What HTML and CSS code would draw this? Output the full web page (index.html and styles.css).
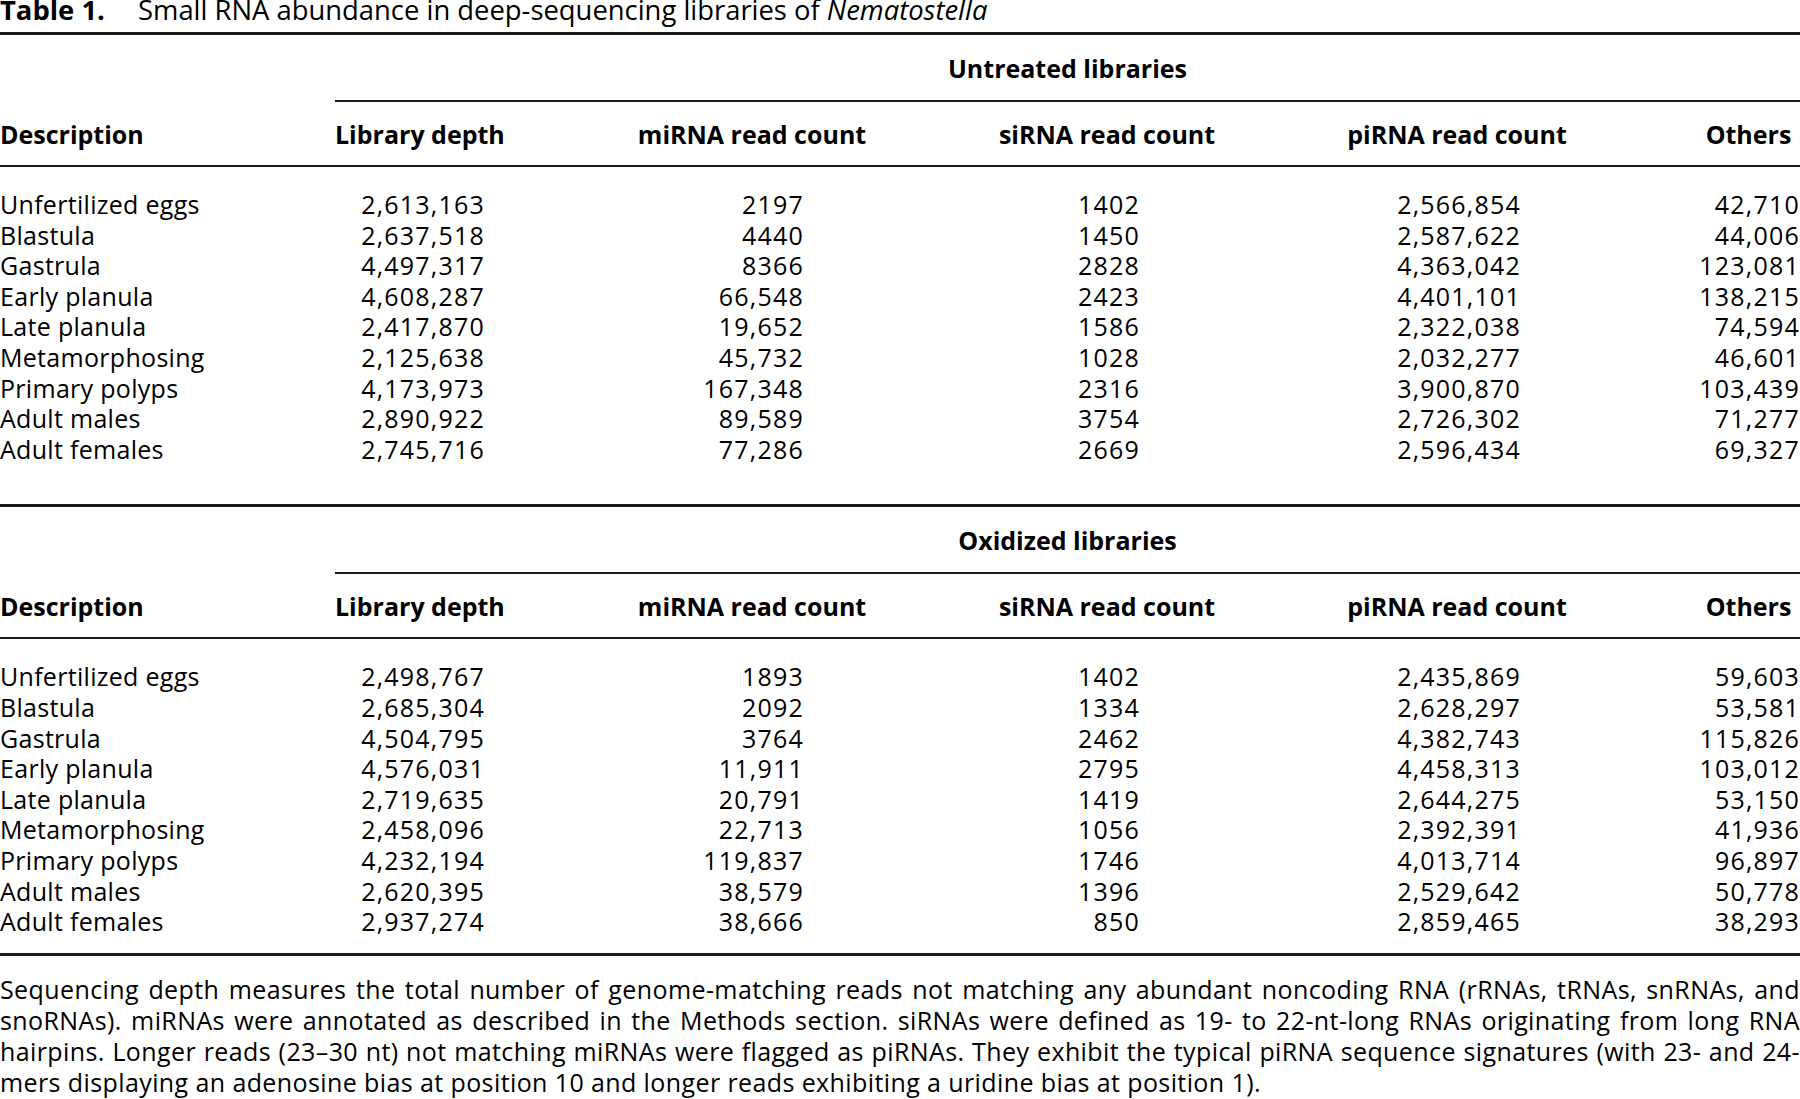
FILE: index.html
```html
<!DOCTYPE html>
<html lang="en">

<head>
    <meta charset="UTF-8">
    <meta name="viewport" content="width=device-width, initial-scale=1.0">
    <title>Table 1. Small RNA abundance</title>
    <link rel="stylesheet" href="styles.css">
</head>

<body>
    <div class="title"><b>Table 1.</b>Small RNA abundance in deep-sequencing libraries of <i>Nematostella</i></div>

    <table class="block">
        <colgroup>
            <col class="w1"><col class="w2"><col class="w3"><col class="w4"><col class="w5"><col class="w6">
        </colgroup>
        <thead>
            <tr class="group">
                <th></th>
                <th colspan="5" class="span">Untreated libraries</th>
            </tr>
            <tr class="head">
                <th class="desc">Description</th>
                <th class="depth">Library depth</th>
                <th>miRNA read count</th>
                <th>siRNA read count</th>
                <th>piRNA read count</th>
                <th>Others</th>
            </tr>
        </thead>
        <tbody>
            <tr class="first"><td>Unfertilized eggs</td><td>2,613,163</td><td>2197</td><td>1402</td><td>2,566,854</td><td>42,710</td></tr>
            <tr><td>Blastula</td><td>2,637,518</td><td>4440</td><td>1450</td><td>2,587,622</td><td>44,006</td></tr>
            <tr><td>Gastrula</td><td>4,497,317</td><td>8366</td><td>2828</td><td>4,363,042</td><td>123,081</td></tr>
            <tr><td>Early planula</td><td>4,608,287</td><td>66,548</td><td>2423</td><td>4,401,101</td><td>138,215</td></tr>
            <tr><td>Late planula</td><td>2,417,870</td><td>19,652</td><td>1586</td><td>2,322,038</td><td>74,594</td></tr>
            <tr><td>Metamorphosing</td><td>2,125,638</td><td>45,732</td><td>1028</td><td>2,032,277</td><td>46,601</td></tr>
            <tr><td>Primary polyps</td><td>4,173,973</td><td>167,348</td><td>2316</td><td>3,900,870</td><td>103,439</td></tr>
            <tr><td>Adult males</td><td>2,890,922</td><td>89,589</td><td>3754</td><td>2,726,302</td><td>71,277</td></tr>
            <tr class="last"><td>Adult females</td><td>2,745,716</td><td>77,286</td><td>2669</td><td>2,596,434</td><td>69,327</td></tr>
        </tbody>
    </table>

    <table class="block second">
        <colgroup>
            <col class="w1"><col class="w2"><col class="w3"><col class="w4"><col class="w5"><col class="w6">
        </colgroup>
        <thead>
            <tr class="group">
                <th></th>
                <th colspan="5" class="span">Oxidized libraries</th>
            </tr>
            <tr class="head">
                <th class="desc">Description</th>
                <th class="depth">Library depth</th>
                <th>miRNA read count</th>
                <th>siRNA read count</th>
                <th>piRNA read count</th>
                <th>Others</th>
            </tr>
        </thead>
        <tbody>
            <tr class="first"><td>Unfertilized eggs</td><td>2,498,767</td><td>1893</td><td>1402</td><td>2,435,869</td><td>59,603</td></tr>
            <tr><td>Blastula</td><td>2,685,304</td><td>2092</td><td>1334</td><td>2,628,297</td><td>53,581</td></tr>
            <tr><td>Gastrula</td><td>4,504,795</td><td>3764</td><td>2462</td><td>4,382,743</td><td>115,826</td></tr>
            <tr><td>Early planula</td><td>4,576,031</td><td>11,911</td><td>2795</td><td>4,458,313</td><td>103,012</td></tr>
            <tr><td>Late planula</td><td>2,719,635</td><td>20,791</td><td>1419</td><td>2,644,275</td><td>53,150</td></tr>
            <tr><td>Metamorphosing</td><td>2,458,096</td><td>22,713</td><td>1056</td><td>2,392,391</td><td>41,936</td></tr>
            <tr><td>Primary polyps</td><td>4,232,194</td><td>119,837</td><td>1746</td><td>4,013,714</td><td>96,897</td></tr>
            <tr><td>Adult males</td><td>2,620,395</td><td>38,579</td><td>1396</td><td>2,529,642</td><td>50,778</td></tr>
            <tr class="last"><td>Adult females</td><td>2,937,274</td><td>38,666</td><td>850</td><td>2,859,465</td><td>38,293</td></tr>
        </tbody>
    </table>

    <p class="note">
        <span class="ln">Sequencing depth measures the total number of genome-matching reads not matching any abundant noncoding RNA (rRNAs, tRNAs, snRNAs, and</span>
        <span class="ln">snoRNAs). miRNAs were annotated as described in the Methods section. siRNAs were defined as 19- to 22-nt-long RNAs originating from long RNA</span>
        <span class="ln">hairpins. Longer reads (23–30 nt) not matching miRNAs were flagged as piRNAs. They exhibit the typical piRNA sequence signatures (with 23- and 24-</span>
        <span class="ln end">mers displaying an adenosine bias at position 10 and longer reads exhibiting a uridine bias at position 1).</span>
    </p>
</body>

</html>
```

FILE: styles.css
```css
body {
    margin: 0;
    font-family: "Open Sans", Lato, "Liberation Sans", sans-serif;
    font-size: 25px;
    color: #000;
    background-color: #fff;
}

.title {
    margin: 0 0 12px;
    font-size: 27.4px;
    line-height: 20px;
    white-space: nowrap;
}

.title b {
    display: inline-block;
    width: 138px;
}

.block {
    width: 1800px;
    table-layout: fixed;
    border-collapse: separate;
    border-spacing: 0;
}

.block .group th {
    border-top: 3px solid #1a1a1a;
}

.block.second .group th {
    border-top: none;
}

.w1 { width: 335px; }
.w2 { width: 172px; }
.w3 { width: 490px; }
.w4 { width: 220px; }
.w5 { width: 480px; }
.w6 { width: 103px; }

th {
    font-weight: bold;
    white-space: nowrap;
    line-height: 30px;
    text-align: center;
    padding: 0;
}

.group th {
    padding: 18px 0 17px;
}

.group .span {
    border-bottom: 2px solid #1a1a1a;
}

.head th {
    padding: 17px 0 16px;
    border-bottom: 2px solid #1a1a1a;
}

.head .desc,
.head .depth {
    text-align: left;
}

td {
    padding: 0;
    line-height: 30.6px;
    white-space: nowrap;
    text-align: right;
    letter-spacing: 1.2px;
}

td:nth-child(1) {
    text-align: left;
    letter-spacing: 0.3px;
}

td:nth-child(2) { padding-right: 22px; }
td:nth-child(3) { padding-right: 193px; }
td:nth-child(4) { padding-right: 77px; }
td:nth-child(5) { padding-right: 176px; }
td:nth-child(6) { padding-right: 0; }

tr.first td {
    padding-top: 22px;
}

tr.last td {
    padding-bottom: 40px;
    border-bottom: 3px solid #1a1a1a;
}

.second tr.last td {
    padding-bottom: 16px;
}

.note {
    margin: 18px 0 0;
    line-height: 31px;
    letter-spacing: 0.4px;
}

.note .ln {
    display: block;
    white-space: nowrap;
    text-align: justify;
    text-align-last: justify;
}

.note .ln.end {
    text-align-last: left;
}
```
